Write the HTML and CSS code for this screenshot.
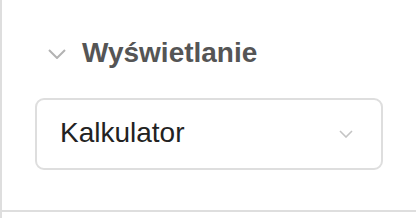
FILE: index.html
```html
<!DOCTYPE html>
<html lang="pl">
<head>
    <meta charset="UTF-8">
    <meta name="viewport" content="width=device-width, initial-scale=1.0">
    <title>Wyświetlanie</title>
    <link rel="stylesheet" href="styles.css">
</head>
<body>

<div class="sidebar">
    <div class="panel">
        <div class="panel-title">
            <svg class="toggle" width="18" height="10" viewBox="0 0 18 10">
                <polyline points="1,1 9,9 17,1" fill="none" stroke="#b3b3b3" stroke-width="2"/>
            </svg>
            <span>Wyświetlanie</span>
        </div>
        <div class="select-box">
            <span class="select-value">Kalkulator</span>
            <svg class="select-arrow" width="14" height="8" viewBox="0 0 14 8">
                <polyline points="1,1 7,7 13,1" fill="none" stroke="#c4c4c4" stroke-width="1.6"/>
            </svg>
        </div>
    </div>
    <div class="panel-next"></div>
</div>

</body>
</html>
```

FILE: styles.css
```css
body {
    margin: 0;
    font-family: "Liberation Sans", Arial, sans-serif;
    background-color: #fff;
}
.sidebar {
    border-left: 2px solid #dedede;
    min-height: 218px;
}
.panel {
    padding: 37px 33px 40px 33px;
    border-bottom: 2px solid #dedede;
}
.panel-title {
    display: flex;
    align-items: center;
    padding-left: 13px;
    font-size: 28px;
    line-height: 32px;
    font-weight: bold;
    color: #555;
}
.panel-title .toggle {
    margin-right: 16px;
    margin-top: 1px;
}
.select-box {
    margin-top: 29px;
    height: 68px;
    border: 2px solid #dedede;
    border-radius: 9px;
    display: flex;
    align-items: center;
    justify-content: space-between;
    padding: 0 28px 0 23px;
}
.select-value {
    font-size: 28px;
    line-height: 32px;
    color: #222;
    margin-top: -2px;
}
```
